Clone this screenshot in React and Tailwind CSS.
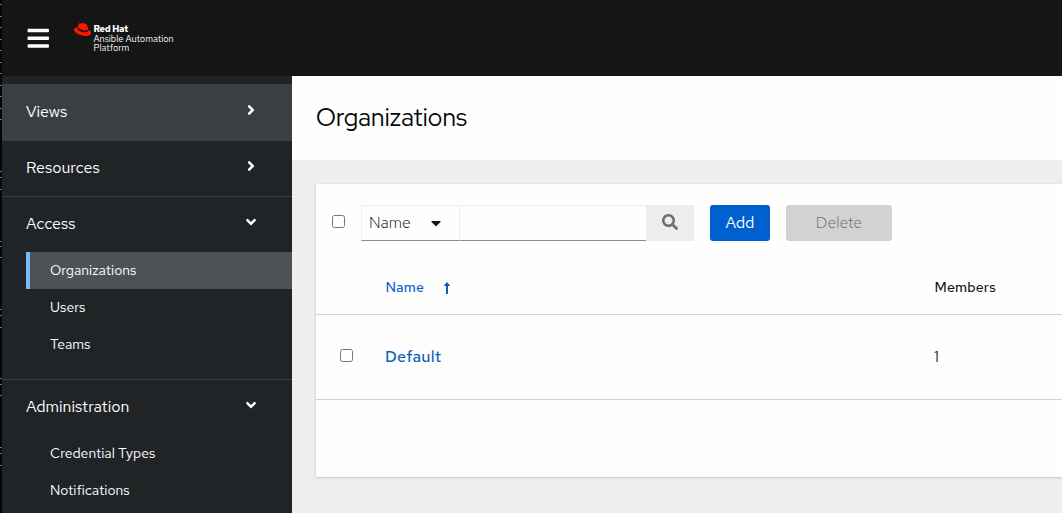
import {
  FaAngleDown,
  FaAngleRight,
  FaBars,
  FaCaretDown,
  FaRedhat,
  FaSearch,
} from "react-icons/fa";

const EDGE_TICKS = [
  4, 16, 27, 39, 50, 62, 73, 85, 96, 108, 119, 171, 177, 189, 241, 246, 257, 309, 315, 327, 378,
  384, 395, 447, 453, 465,
];

function EdgeStrip() {
  return (
    <svg className="h-[513px] w-[2px] shrink-0 bg-[#050508]" viewBox="0 0 2 513">
      {EDGE_TICKS.map((y) => (
        <rect key={y} x="0" y={y} width="1.5" height="1" fill="#85858a" />
      ))}
    </svg>
  );
}

function SortArrow() {
  return (
    <svg className="h-[12px] w-[6px]" viewBox="0 0 6 12" fill="currentColor">
      <path d="M3 0 6 3.4V4H4v8H2V4H0v-.6z" />
    </svg>
  );
}

function Checkbox({ label }) {
  return (
    <input
      type="checkbox"
      aria-label={label}
      className="block size-[13px] shrink-0 appearance-none rounded-[2.5px] border border-[#767676] bg-white"
    />
  );
}

function SectionHeader({ children, open }) {
  const Icon = open ? FaAngleDown : FaAngleRight;
  return (
    <button className="flex h-[55px] w-full items-center justify-between pr-[33px] pb-[2px] pl-6 text-left text-[16px] text-white">
      <span>{children}</span>
      <Icon className="mb-1 size-4" />
    </button>
  );
}

function SubItem({ children, active }) {
  return (
    <a
      className={`ml-6 flex h-[37px] items-center border-l-4 pl-5 text-[14px] text-white ${
        active ? "border-[#73bcf7] bg-[#4f5255]" : "border-transparent"
      }`}
    >
      <span>{children}</span>
    </a>
  );
}

function Sidebar() {
  return (
    <nav className="flex w-[290px] shrink-0 flex-col bg-[#212427] pt-2">
      <div className="bg-[#3c3f42] pt-px pb-px">
        <SectionHeader>Views</SectionHeader>
      </div>
      <div className="border-b border-[#3c3f42]">
        <SectionHeader>Resources</SectionHeader>
      </div>
      <div className="border-b border-[#3c3f42] pb-4">
        <SectionHeader open>Access</SectionHeader>
        <SubItem active>Organizations</SubItem>
        <SubItem>Users</SubItem>
        <SubItem>Teams</SubItem>
      </div>
      <div>
        <SectionHeader open>Administration</SectionHeader>
        <SubItem>Credential Types</SubItem>
        <SubItem>Notifications</SubItem>
      </div>
    </nav>
  );
}

function Masthead() {
  return (
    <header className="flex h-[76px] shrink-0 items-center bg-[#151515] pl-6 text-white">
      <FaBars className="size-[24.5px]" />
      <div className="ml-[23px] flex h-[34px] items-start">
        <FaRedhat className="size-[17px] text-[#ff1500]" />
        <div className="ml-[3px] pt-[4px] text-[9.2px] leading-[9.5px] whitespace-nowrap">
          <div className="font-bold tracking-[-0.2px]">Red Hat</div>
          <div>Ansible Automation</div>
          <div>Platform</div>
        </div>
      </div>
    </header>
  );
}

function Toolbar() {
  return (
    <div className="flex h-[78px] items-center pl-4">
      <div className="pb-[3px]">
        <Checkbox label="Select all" />
      </div>
      <div className="ml-4 flex h-9">
        <button className="flex w-[99px] items-center justify-between border border-[#ededed] border-b-[#8a8d90] pr-[15px] pb-px pl-[7px] text-[16px] font-light text-[#151515]">
          <span>Name</span>
          <FaCaretDown className="size-4" />
        </button>
        <div className="w-[186px] border-t border-b border-t-[#ededed] border-b-[#8a8d90]" />
        <button className="flex w-12 items-center justify-center bg-[#ededed] text-[#6a6e73]">
          <FaSearch className="mb-[2px] size-4" />
        </button>
      </div>
      <button className="ml-4 h-9 w-[60px] rounded-[3px] bg-[#0060d0] text-[16px] text-white">
        Add
      </button>
      <button className="ml-4 h-9 w-[106px] rounded-[3px] bg-[#d2d2d2] text-[16px] font-light text-[#6a6e73]">
        Delete
      </button>
    </div>
  );
}

function OrganizationsTable() {
  return (
    <div>
      <div className="flex h-[53px] items-center border-b border-[#d2d2d2] pb-px text-[14px] font-medium tracking-[0.15px]">
        <div className="ml-[69.5px] flex w-[549px] items-center text-[#0b5fc4]">
          <span className="w-[58px]">Name</span>
          <SortArrow />
        </div>
        <div className="text-[#151515]">Members</div>
      </div>
      <div className="flex h-[85px] items-center border-b border-[#d2d2d2] text-[16px]">
        <div className="ml-6 w-[45px] pb-[3px]">
          <Checkbox label="Select Default" />
        </div>
        <div className="w-[549px] font-medium tracking-[0.3px] text-[#0b5fb8]">Default</div>
        <div className="font-normal text-[#3a1450]">1</div>
      </div>
    </div>
  );
}

export default function App() {
  return (
    <div className="flex h-[513px] w-[1062px] overflow-hidden bg-[#eeeeee] font-['Red_Hat_Text','Inter',sans-serif]">
      <EdgeStrip />
      <div className="flex min-w-0 flex-1 flex-col">
        <Masthead />
        <div className="flex min-h-0 flex-1">
          <Sidebar />
          <main className="flex min-w-0 flex-1 flex-col">
            <div className="flex h-[84px] shrink-0 items-center bg-[#fefefe] pb-px pl-6">
              <h1 className="font-['Red_Hat_Display','Red_Hat_Text','Inter',sans-serif] text-[24.5px] tracking-[0.15px] text-[#080808]">
                Organizations
              </h1>
            </div>
            <section className="mt-6 ml-6 h-[293px] bg-[#fefefe] shadow-[0_1px_2px_0_rgba(3,3,3,0.15),0_0_2px_0_rgba(3,3,3,0.08)]">
              <Toolbar />
              <OrganizationsTable />
            </section>
          </main>
        </div>
      </div>
    </div>
  );
}
